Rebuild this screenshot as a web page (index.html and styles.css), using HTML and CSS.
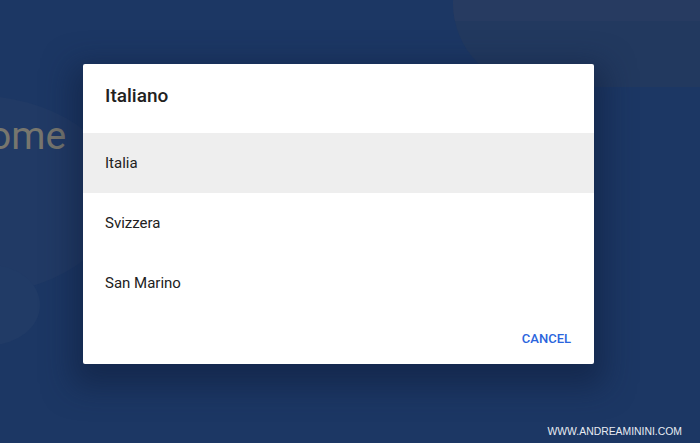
FILE: index.html
```html
<!DOCTYPE html>
<html>
<head>
<meta charset="utf-8">
<link rel="stylesheet" href="styles.css">
</head>
<body>
<div class="page">
  <div class="bg-shape-tr"></div>
  <div class="bg-shape-l"></div>
  <div class="bg-shape-bl"></div>
  <div class="bg-text">ome</div>
  <div class="dialog">
    <div class="title">Italiano</div>
    <div class="list">
      <div class="item selected">Italia</div>
      <div class="item">Svizzera</div>
      <div class="item">San Marino</div>
    </div>
    <div class="actions"><span class="btn">CANCEL</span></div>
  </div>
  <div class="watermark">WWW.ANDREAMININI.COM</div>
</div>
</body>
</html>
```
FILE: styles.css
```css
html, body { margin: 0; padding: 0; }
body { background: #1c3764; font-family: Roboto, "Liberation Sans", sans-serif; }
.page { position: relative; width: 700px; height: 443px; overflow: hidden; background: #1c3764; }
.bg-shape-tr { position: absolute; left: 453px; top: -80px; width: 400px; height: 167px; border-radius: 90px; background: #22395f; overflow: hidden; }
.bg-shape-tr::before { content: ""; position: absolute; left: 0; right: 0; top: 80px; height: 21px; background: #273b61; }
.bg-shape-l { position: absolute; left: -180px; top: 95px; width: 300px; height: 200px; border-radius: 50%; background: #213a65; }
.bg-shape-bl { position: absolute; left: -60px; top: 265px; width: 100px; height: 80px; border-radius: 50%; background: #213b66; }
.bg-text { position: absolute; left: -11px; top: 113px; font-size: 39px; color: #77766e; font-family: Roboto, sans-serif; }
.dialog { position: absolute; left: 83px; top: 64px; width: 511px; height: 300px; background: #fff; border-radius: 2px; box-shadow: 0 12px 30px 10px rgba(15, 30, 60, 0.55); display: flex; flex-direction: column; }
.title { height: 69px; padding-left: 22px; padding-top: 20px; box-sizing: border-box; font-size: 19px; font-weight: 500; color: #212121; }
.list { display: flex; flex-direction: column; }
.item { height: 60px; display: flex; align-items: center; padding-left: 22px; font-size: 15px; color: #212121; }
.item.selected { background: #eeeeee; }
.actions { flex: 1; display: flex; justify-content: flex-end; align-items: center; padding-right: 23px; }
.btn { font-size: 13px; font-weight: 500; color: #2b65dd; }
.watermark { position: absolute; right: 18px; top: 426px; font-family: "Liberation Sans", Arial, sans-serif; font-size: 10.4px; color: #e8ecf3; }
```
